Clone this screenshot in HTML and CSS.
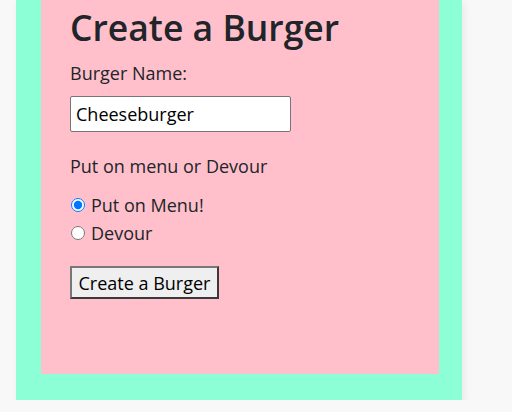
FILE: index.html
```html
<!DOCTYPE html>
<html lang="en">
<head>
<meta charset="utf-8">
<title>Create a Burger</title>
<link rel="stylesheet" href="styles.css">
</head>
<body>
<div class="page">
  <div class="frame">
    <form class="card">
      <h1 class="title">Create a Burger</h1>
      <label class="label" for="burger-name">Burger Name:</label>
      <input class="text-input" id="burger-name" type="text" value="Cheeseburger">
      <p class="question">Put on menu or Devour</p>
      <div class="options">
        <label class="option"><input class="radio" type="radio" name="devoured" checked> Put on Menu!</label>
        <label class="option"><input class="radio" type="radio" name="devoured"> Devour</label>
      </div>
      <button class="submit" type="button">Create a Burger</button>
    </form>
  </div>
</div>
</body>
</html>
```
FILE: styles.css
```css
html, body {
  margin: 0;
  padding: 0;
}
body {
  background: #f8f8f8;
  font-family: "Open Sans", "Noto Sans", sans-serif;
  color: #212529;
  font-size: 18px;
}
.page {
  display: flex;
  align-items: flex-start;
  padding-left: 16px;
}
.frame {
  width: 398px;
  background: #8cffd6;
  padding: 0 23px 26px 25px;
  box-shadow: 2px 3px 8px rgba(0, 0, 0, 0.07);
}
.card {
  background: #ffc0cb;
  padding: 6px 29px 75px;
  display: flex;
  flex-direction: column;
  align-items: flex-start;
}
.title {
  margin: 0 0 12px;
  font-size: 35.5px;
  font-weight: 600;
  line-height: 43px;
}
.label {
  line-height: 24px;
  margin-bottom: 11px;
}
.text-input {
  box-sizing: border-box;
  width: 221px;
  height: 36px;
  margin: 0;
  padding: 0 5px;
  border: 1px solid #767676;
  border-radius: 2px;
  background: #fff;
  font: inherit;
  color: #000;
}
.question {
  margin: 22px 0 13px;
  line-height: 24px;
}
.options {
  display: flex;
  flex-direction: column;
}
.option {
  display: flex;
  align-items: center;
  gap: 6px;
  height: 28px;
  line-height: 28px;
}
.radio {
  width: 14px;
  height: 14px;
  margin: 0 0 0 1px;
}
.submit {
  margin-top: 19px;
  box-sizing: border-box;
  width: 149px;
  height: 33px;
  padding: 0;
  background: #efefef;
  border-style: solid;
  border-width: 2px;
  border-color: #777 #3a3a3a #3a3a3a #777;
  font: inherit;
  color: #000;
}
```
